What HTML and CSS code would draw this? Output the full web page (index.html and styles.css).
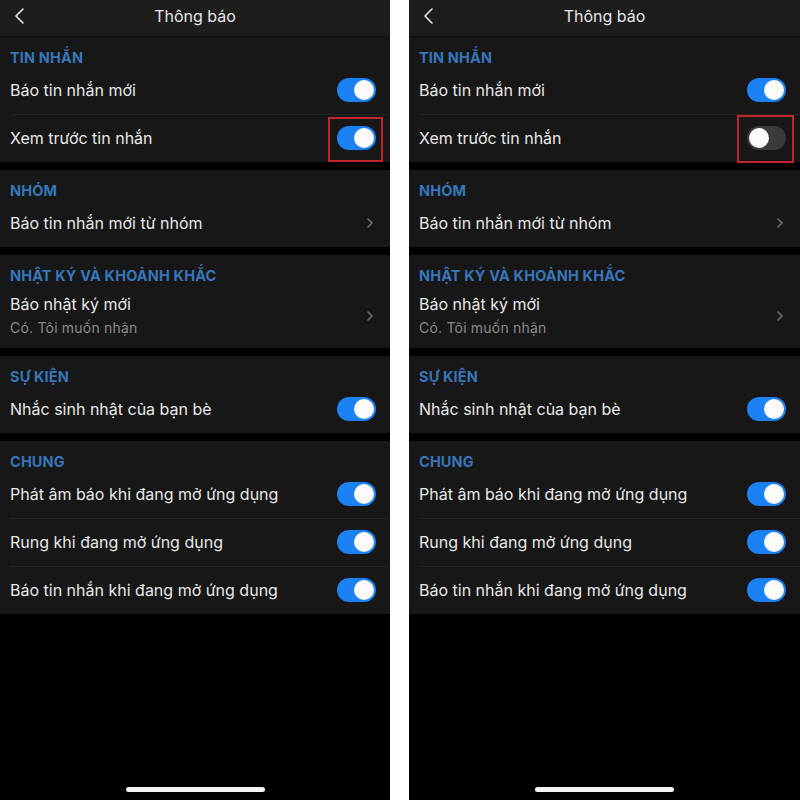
FILE: index.html
```html
<!DOCTYPE html>
<html lang="vi">
<head>
<meta charset="utf-8">
<title>Thông báo</title>
<link rel="stylesheet" href="styles.css">
</head>
<body>
<div class="screens">
  <div class="phone left">
    <div class="topbar">
      <svg class="back" width="12" height="18" viewBox="0 0 12 18"><polyline points="9,2 2,9 9,16" fill="none" stroke="#e8e8e8" stroke-width="1.6" stroke-linecap="round" stroke-linejoin="round"/></svg>
      <div class="title">Thông báo</div>
    </div>
    <div class="section">
      <div class="sec-title">TIN NHẮN</div>
      <div class="row"><span class="label">Báo tin nhắn mới</span><span class="toggle on"></span></div>
      <div class="row"><span class="label">Xem trước tin nhắn</span><span class="toggle on marked"></span></div>
    </div>
    <div class="section">
      <div class="sec-title">NHÓM</div>
      <div class="row"><span class="label">Báo tin nhắn mới từ nhóm</span><svg class="chev" width="8" height="12" viewBox="0 0 8 12"><polyline points="2,2 6,6 2,10" fill="none" stroke="#707070" stroke-width="1.6" stroke-linecap="round" stroke-linejoin="round"/></svg></div>
    </div>
    <div class="section">
      <div class="sec-title">NHẬT KÝ VÀ KHOẢNH KHẮC</div>
      <div class="row tall"><div class="texts"><span class="label">Báo nhật ký mới</span><span class="sub">Có. Tôi muốn nhận</span></div><svg class="chev" width="8" height="12" viewBox="0 0 8 12"><polyline points="2,2 6,6 2,10" fill="none" stroke="#707070" stroke-width="1.6" stroke-linecap="round" stroke-linejoin="round"/></svg></div>
    </div>
    <div class="section">
      <div class="sec-title">SỰ KIỆN</div>
      <div class="row"><span class="label">Nhắc sinh nhật của bạn bè</span><span class="toggle on"></span></div>
    </div>
    <div class="section">
      <div class="sec-title">CHUNG</div>
      <div class="row"><span class="label">Phát âm báo khi đang mở ứng dụng</span><span class="toggle on"></span></div>
      <div class="row"><span class="label">Rung khi đang mở ứng dụng</span><span class="toggle on"></span></div>
      <div class="row"><span class="label">Báo tin nhắn khi đang mở ứng dụng</span><span class="toggle on"></span></div>
    </div>
    <div class="home"></div>
  </div>

  <div class="phone right">
    <div class="topbar">
      <svg class="back" width="12" height="18" viewBox="0 0 12 18"><polyline points="9,2 2,9 9,16" fill="none" stroke="#e8e8e8" stroke-width="1.6" stroke-linecap="round" stroke-linejoin="round"/></svg>
      <div class="title">Thông báo</div>
    </div>
    <div class="section">
      <div class="sec-title">TIN NHẮN</div>
      <div class="row"><span class="label">Báo tin nhắn mới</span><span class="toggle on"></span></div>
      <div class="row"><span class="label">Xem trước tin nhắn</span><span class="toggle off marked"></span></div>
    </div>
    <div class="section">
      <div class="sec-title">NHÓM</div>
      <div class="row"><span class="label">Báo tin nhắn mới từ nhóm</span><svg class="chev" width="8" height="12" viewBox="0 0 8 12"><polyline points="2,2 6,6 2,10" fill="none" stroke="#707070" stroke-width="1.6" stroke-linecap="round" stroke-linejoin="round"/></svg></div>
    </div>
    <div class="section">
      <div class="sec-title">NHẬT KÝ VÀ KHOẢNH KHẮC</div>
      <div class="row tall"><div class="texts"><span class="label">Báo nhật ký mới</span><span class="sub">Có. Tôi muốn nhận</span></div><svg class="chev" width="8" height="12" viewBox="0 0 8 12"><polyline points="2,2 6,6 2,10" fill="none" stroke="#707070" stroke-width="1.6" stroke-linecap="round" stroke-linejoin="round"/></svg></div>
    </div>
    <div class="section">
      <div class="sec-title">SỰ KIỆN</div>
      <div class="row"><span class="label">Nhắc sinh nhật của bạn bè</span><span class="toggle on"></span></div>
    </div>
    <div class="section">
      <div class="sec-title">CHUNG</div>
      <div class="row"><span class="label">Phát âm báo khi đang mở ứng dụng</span><span class="toggle on"></span></div>
      <div class="row"><span class="label">Rung khi đang mở ứng dụng</span><span class="toggle on"></span></div>
      <div class="row"><span class="label">Báo tin nhắn khi đang mở ứng dụng</span><span class="toggle on"></span></div>
    </div>
    <div class="home"></div>
  </div>
</div>
</body>
</html>
```
FILE: styles.css
```css
html, body {
  margin: 0;
  padding: 0;
  background: #ffffff;
}
body {
  font-family: Inter, "Noto Sans", "Liberation Sans", sans-serif;
  color: #e8e8e8;
}
.screens {
  display: flex;
  gap: 19px;
  width: 800px;
  height: 800px;
}
.phone {
  background: #000;
  height: 800px;
  display: flex;
  flex-direction: column;
}
.phone.left { width: 390px; }
.phone.right { width: 391px; }

.topbar {
  height: 36px;
  border-bottom: 1px solid #0e0e0e;
  background: #1d1d1d;
  display: flex;
  align-items: center;
  position: relative;
}
.back {
  position: absolute;
  left: 14px;
  top: 7px;
}
.title {
  flex: 1;
  text-align: center;
  font-size: 16px;
  color: #e6e6e6;
  margin-top: -4px;
}

.section {
  background: #171717;
  margin-bottom: 8px;
}
.sec-title {
  height: 29px;
  box-sizing: border-box;
  padding: 12px 10px 0;
  font-size: 14.5px;
  line-height: 17px;
  font-weight: 700;
  color: #3676ba;
  letter-spacing: 0.15px;
}
.row {
  height: 48px;
  display: flex;
  align-items: center;
  justify-content: space-between;
  padding: 0 14px 0 10px;
  position: relative;
}
.row + .row::before {
  content: "";
  position: absolute;
  left: 10px;
  right: 0;
  top: 0;
  height: 1px;
  background: #242424;
}
.row.tall {
  height: 64px;
}
.texts {
  display: flex;
  flex-direction: column;
  margin-top: -1px;
}
.label {
  font-size: 16px;
  line-height: 22px;
  color: #e8e8e8;
  letter-spacing: 0;
}
.sub {
  font-size: 14px;
  line-height: 20px;
  margin-top: 3px;
  color: #8a8a8a;
  letter-spacing: 0.2px;
}
.chev {
  margin-right: 2px;
}
.toggle {
  width: 39px;
  height: 24px;
  border-radius: 12px;
  position: relative;
  flex: none;
}
.toggle::before {
  content: "";
  position: absolute;
  top: 2px;
  width: 20px;
  height: 20px;
  border-radius: 50%;
  background: #fafafa;
}
.toggle.on { background: #1b82f5; }
.toggle.on::before { right: 2px; }
.toggle.off { background: #3a3a3c; }
.toggle.off::before { left: 2px; }
.toggle.marked::after {
  content: "";
  position: absolute;
  border: 2px solid #c4242c;
}
.left .toggle.marked::after {
  left: -9px;
  right: -7px;
  top: -9px;
  bottom: -12px;
}
.right .toggle.marked::after {
  left: -10px;
  right: -8px;
  top: -11px;
  bottom: -13px;
}

.home {
  margin-top: auto;
  margin-bottom: 8px;
  align-self: center;
  width: 139px;
  height: 5px;
  border-radius: 3px;
  background: #f4f4f4;
}
```
